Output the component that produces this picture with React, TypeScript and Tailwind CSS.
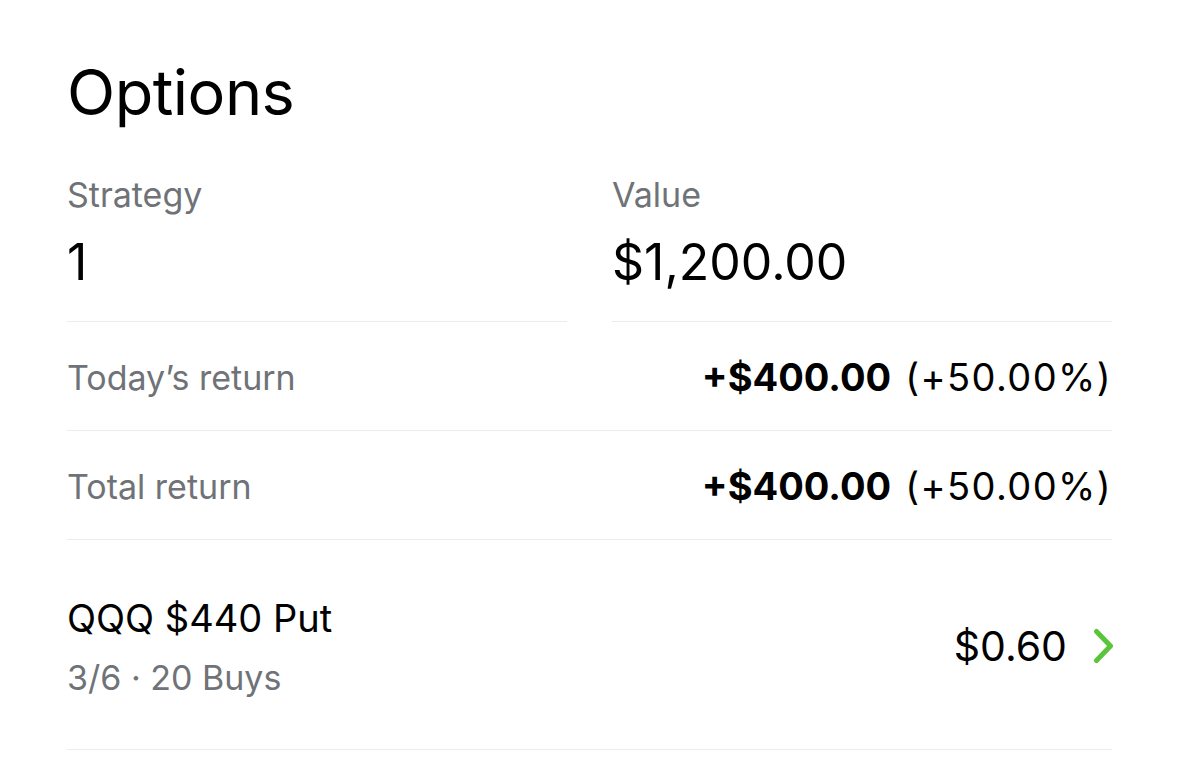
const returns = [
  { label: "Today’s return", amount: "+$400.00", pct: "(+50.00%)" },
  { label: "Total return", amount: "+$400.00", pct: "(+50.00%)" },
]

export default function App() {
  return (
    <div className="min-h-screen bg-white font-['Inter',sans-serif] text-black">
      <div className="px-[67px] pt-[52px]">
        <h1 className="text-[63px] leading-[80px] tracking-[-0.5px]">Options</h1>

        {/* summary columns */}
        <div className="mt-[43px] grid grid-cols-2 gap-[45px]">
          <div className="border-b border-[#ececec] pb-[31px]">
            <div className="text-[34px] leading-[40px] text-[#6f7378]">Strategy</div>
            <div className="mt-[19px] text-[50px] leading-[56px]">1</div>
          </div>
          <div className="border-b border-[#ececec] pb-[31px]">
            <div className="text-[34px] leading-[40px] text-[#6f7378]">Value</div>
            <div className="mt-[19px] text-[50px] leading-[56px]">$1,200.00</div>
          </div>
        </div>

        {returns.map((r) => (
          <div
            key={r.label}
            className="flex h-[109px] items-center justify-between border-b border-[#ececec] pt-[2px]"
          >
            <span className="text-[34px] text-[#6f7378]">{r.label}</span>
            <span className="text-[38px]">
              <span className="font-bold">{r.amount}</span>
              <span className="ml-[14px] tracking-[1.4px]">{r.pct}</span>
            </span>
          </div>
        ))}

        {/* position row */}
        <div className="flex h-[210px] items-center justify-between border-b border-[#ececec] pt-[2px]">
          <div>
            <div className="text-[38px] leading-[48px]">QQQ $440 Put</div>
            <div className="mt-[16px] text-[34px] leading-[40px] text-[#6f7378]">3/6 · 20 Buys</div>
          </div>
          <div className="flex items-center gap-[26px]">
            <span className="text-[41px] leading-[48px]">$0.60</span>
            <svg width="21" height="36" viewBox="0 0 21 36" fill="none" className="-mr-[2px]">
              <path d="M3.5 3.5 L17.5 18 L3.5 32.5" stroke="#5ac53b" strokeWidth="5" strokeLinecap="round" strokeLinejoin="round" />
            </svg>
          </div>
        </div>
      </div>
    </div>
  )
}
